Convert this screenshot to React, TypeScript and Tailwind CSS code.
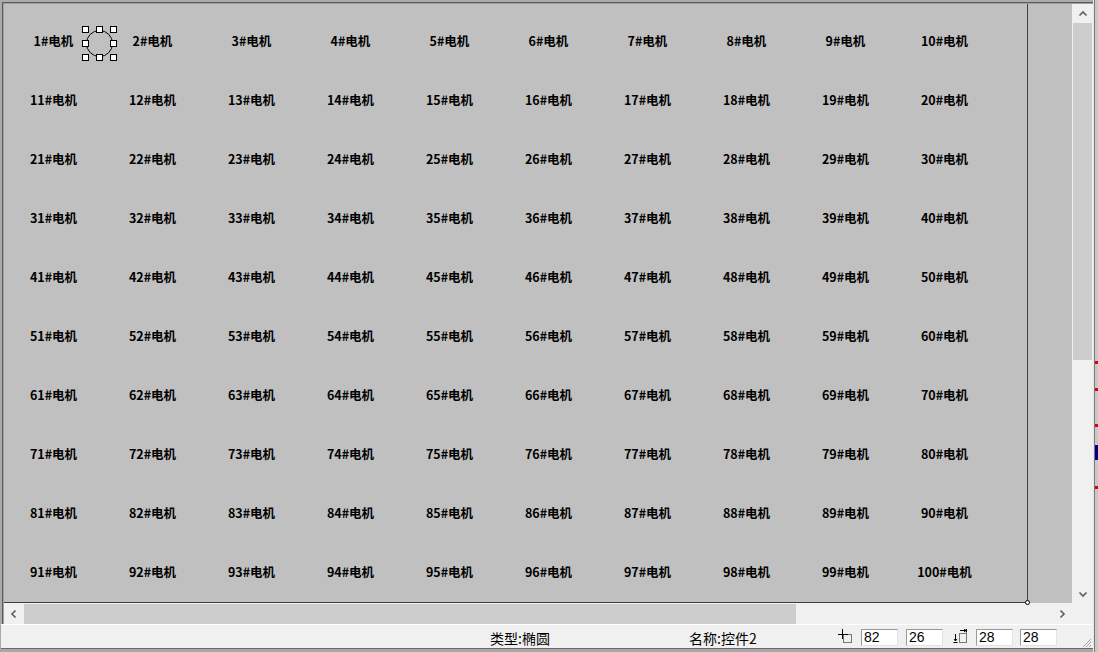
import React from "react";

// chevron arrows used by the scroll bars
function Chevron({ dir }: { dir: "up" | "down" | "left" | "right" }) {
  const points = {
    up: "1.5,6.5 5,3 8.5,6.5",
    down: "1.5,3.5 5,7 8.5,3.5",
    left: "6.5,1.5 3,5 6.5,8.5",
    right: "3.5,1.5 7,5 3.5,8.5",
  }[dir];
  return (
    <svg width="10" height="10" viewBox="0 0 10 10">
      <polyline points={points} fill="none" stroke="#606060" strokeWidth="1.7" />
    </svg>
  );
}

function NumBox({ value }: { value: string }) {
  return (
    <div className="w-[37px] h-[17px] bg-white border-t border-l border-[#9a9a9a] border-r border-b border-r-[#e3e3e3] border-b-[#e3e3e3] pl-[2px] text-[14px] leading-[15px] text-black font-['Liberation_Sans',sans-serif]">
      {value}
    </div>
  );
}

export default function App() {
  const labels = Array.from({ length: 100 }, (_, i) => `${i + 1}#电机`);

  return (
    <div className="w-[1098px] h-[652px] flex bg-[#a8a8a8] overflow-hidden">
      {/* Main window */}
      <div className="w-[1093px] flex flex-col">
        {/* Scroll view with sunken frame */}
        <div className="h-[624px] pl-[2px] pt-[2px] bg-[#ababab]">
          <div className="h-full border-l border-t border-[#5a5a5a] pl-[1px] pt-[1px] bg-[#a0a0a0]">
            <div className="flex flex-col w-[1089px]">
              <div className="flex h-[599px]">
                {/* Drawing area */}
                <div className="w-[1068px] bg-[#c0c0c0]">
                  <div className="relative w-[1024px] h-[599px] bg-[#c0c0c0] border-r border-b border-[#404040]">
                    <div className="grid grid-cols-[repeat(10,99px)] pt-[8px]">
                      {labels.map((t) => (
                        <div
                          key={t}
                          className="h-[59px] flex items-center justify-center text-[12.5px] font-bold text-black font-['Noto_Sans_CJK_SC',sans-serif]"
                        >
                          {t}
                        </div>
                      ))}
                    </div>

                    {/* Selected ellipse (控件2) */}
                    <svg className="absolute left-[78px] top-[22px]" width="36" height="36" viewBox="0 0 36 36">
                      <circle cx="17.5" cy="17.5" r="13" fill="none" stroke="#000" strokeWidth="1" />
                      {[0.5, 14.5, 28.5].map((x) =>
                        [0.5, 14.5, 28.5].map((y) =>
                          x === 14.5 && y === 14.5 ? null : (
                            <rect key={`${x}-${y}`} x={x} y={y} width="6" height="6" fill="#fff" stroke="#000" strokeWidth="1" />
                          )
                        )
                      )}
                    </svg>

                    {/* Canvas resize handle */}
                    <div className="absolute -right-[3px] -bottom-[3px] w-[5px] h-[5px] rounded-full bg-white border border-black" />
                  </div>
                </div>

                {/* Vertical scroll bar */}
                <div className="w-[21px] bg-[#f0f0f0] pl-[1px] pr-[1px] flex flex-col">
                  <div className="h-[19px] flex items-center justify-center">
                    <Chevron dir="up" />
                  </div>
                  <div className="h-[337px] bg-[#cdcdcd]" />
                  <div className="flex-1" />
                  <div className="h-[19px] flex items-center justify-center">
                    <Chevron dir="down" />
                  </div>
                </div>
              </div>

              {/* Horizontal scroll bar */}
              <div className="flex h-[21px] border-t border-[#f0f0f0] bg-[#f0f0f0]">
                <div className="w-[1068px] flex">
                  <div className="w-[20px] flex items-center justify-center">
                    <Chevron dir="left" />
                  </div>
                  <div className="w-[772px] bg-[#cdcdcd]" />
                  <div className="flex-1" />
                  <div className="w-[20px] flex items-center justify-center">
                    <Chevron dir="right" />
                  </div>
                </div>
                <div className="w-[21px]" />
              </div>
            </div>
          </div>
        </div>

        {/* Status bar */}
        <div className="h-[28px] pl-[1px] pb-[3px] bg-[#a8a8a8]">
          <div className="h-full bg-[#f0f0f0] border-t border-white border-b border-b-[#696969] flex items-start pt-[4px] text-black font-['Noto_Sans_CJK_SC',sans-serif]">
            <div className="ml-[489px] w-[199px] h-[17px] text-[14px] leading-[18px]">类型:椭圆</div>
            <div className="w-[149px] h-[17px] text-[14px] leading-[18px]">名称:控件2</div>

            {/* position icon */}
            <svg className="mr-[8px]" width="15" height="15" viewBox="0 0 15 15">
              <line x1="4.5" y1="0" x2="4.5" y2="10" stroke="#000" strokeWidth="1" />
              <line x1="0" y1="5.5" x2="10" y2="5.5" stroke="#000" strokeWidth="1" />
              <rect x="5.5" y="5.5" width="8" height="8" fill="none" stroke="#000" strokeWidth="1" strokeDasharray="1 1" />
            </svg>
            <div className="mr-[8px]">
              <NumBox value="82" />
            </div>
            <div className="mr-[10px]">
              <NumBox value="26" />
            </div>

            {/* size icon */}
            <svg className="mr-[8px]" width="15" height="15" viewBox="0 0 15 15">
              <line x1="7" y1="1.5" x2="13" y2="1.5" stroke="#000" strokeWidth="1" />
              <polyline points="11,0 13,1.5 11,3" fill="none" stroke="#000" strokeWidth="1" />
              <line x1="13.5" y1="0" x2="13.5" y2="3.5" stroke="#000" strokeWidth="1" />
              <line x1="2.5" y1="5" x2="2.5" y2="12" stroke="#000" strokeWidth="1" />
              <polyline points="1,10 2.5,12 4,10" fill="none" stroke="#000" strokeWidth="1" />
              <line x1="0.5" y1="13.5" x2="4.5" y2="13.5" stroke="#000" strokeWidth="1" />
              <rect x="6.5" y="4.5" width="7" height="9" fill="none" stroke="#000" strokeWidth="1" strokeDasharray="1 1" />
            </svg>
            <div className="mr-[7px]">
              <NumBox value="28" />
            </div>
            <NumBox value="28" />

            {/* resize grip */}
            <svg className="ml-auto self-end mr-[1px]" width="11" height="11" viewBox="0 0 11 11">
              <line x1="10" y1="2" x2="2" y2="10" stroke="#a0a0a0" strokeWidth="1" />
              <line x1="10" y1="5" x2="5" y2="10" stroke="#a0a0a0" strokeWidth="1" />
              <line x1="10" y1="8" x2="8" y2="10" stroke="#a0a0a0" strokeWidth="1" />
            </svg>
          </div>
        </div>
      </div>

      {/* Edge of the window behind */}
      <div className="w-[5px] flex">
        <div className="w-[1px] bg-[#e8e8e8]" />
        <div className="w-[1px] bg-[#7a7a7a]" />
        <div className="flex-1 bg-[#c8c8c8] flex flex-col">
          <div className="h-[361px]" />
          <div className="h-[3px] bg-[#e00000]" />
          <div className="h-[24px]" />
          <div className="h-[3px] bg-[#e00000]" />
          <div className="h-[33px]" />
          <div className="h-[3px] bg-[#e00000]" />
          <div className="h-[18px]" />
          <div className="h-[15px] bg-[#000080]" />
          <div className="h-[26px]" />
          <div className="h-[3px] bg-[#e00000]" />
        </div>
      </div>
    </div>
  );
}
